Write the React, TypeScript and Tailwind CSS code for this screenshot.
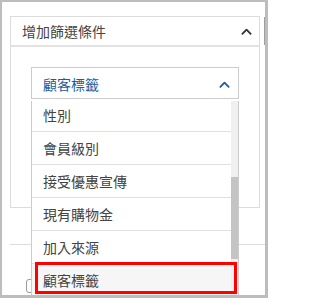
const OPTIONS = ['性別', '會員級別', '接受優惠宣傳', '現有購物金', '加入來源', '顧客標籤'];

function Chevron({ className }: { className?: string }) {
  return (
    <svg viewBox="0 0 12 7" className={className} fill="none" stroke="currentColor" strokeWidth="2" strokeLinecap="round" strokeLinejoin="round">
      <polyline points="1.5,6 6,1.5 10.5,6" />
    </svg>
  );
}

export default function App() {
  return (
    <div
      className="relative w-[268px] h-[298px] overflow-hidden bg-white border-t-2 border-l-2 border-r-[3px] border-b-[3px] border-[#bdbdbd] text-[14px] text-[#444]"
      style={{ fontFamily: '"Noto Sans CJK TC", "Noto Sans", sans-serif' }}
    >
      {/* Filter card */}
      <div className="mt-[14px] ml-[8px] w-[250px] border border-[#dcdcdc]">
        <div className="h-[30px] flex items-center justify-between pl-[11px] pr-[7px] border-b-2 border-[#e3e3e3]">
          <span>增加篩選條件</span>
          <Chevron className="w-[11px] h-[7px] text-[#333]" />
        </div>
        <div className="h-[160px] pt-[20px] px-[20px]">
          <div className="h-[32px] flex items-center justify-between pl-[11px] pr-[8px] pt-[2px] border border-[#cccccc] text-[#1d5d9b]">
            <span>顧客標籤</span>
            <Chevron className="w-[11px] h-[7px]" />
          </div>
        </div>
      </div>

      <div className="mt-[36px] ml-[8px] border-t border-[#dddddd]" />
      <div className="mt-[34px] ml-[24px] w-[14px] h-[14px] border border-[#9a9a9a] rounded-[3px]" />

      {/* Open dropdown list */}
      <div className="absolute left-[29px] top-[99px] w-[208px] h-[200px] flex bg-white border-x border-[#cccccc]">
        <div className="flex-1 overflow-hidden">
          <div className="-mt-[2px]">
            {OPTIONS.map((o, i) => (
              <div
                key={o}
                className={
                  'h-[33px] flex items-center pl-[11px] border-b border-[#e0e0e0] ' +
                  (i === OPTIONS.length - 1 ? 'bg-[#f6f6f6]' : 'bg-white')
                }
              >
                {o}
              </div>
            ))}
          </div>
        </div>
        <div className="w-[7px] bg-[#f0f0f0]">
          <div className="mt-[76px] h-[82px] bg-[#c4c4c4]" />
        </div>
      </div>

      {/* Highlight annotation */}
      <div className="absolute left-[33px] top-[260px] w-[202px] h-[32px] border-[3px] border-[#ff0000]" />

      {/* Page scrollbar thumb */}
      <div className="absolute right-0 top-[15px] w-[1px] h-[28px] bg-[#9e9e9e]" />
    </div>
  );
}
